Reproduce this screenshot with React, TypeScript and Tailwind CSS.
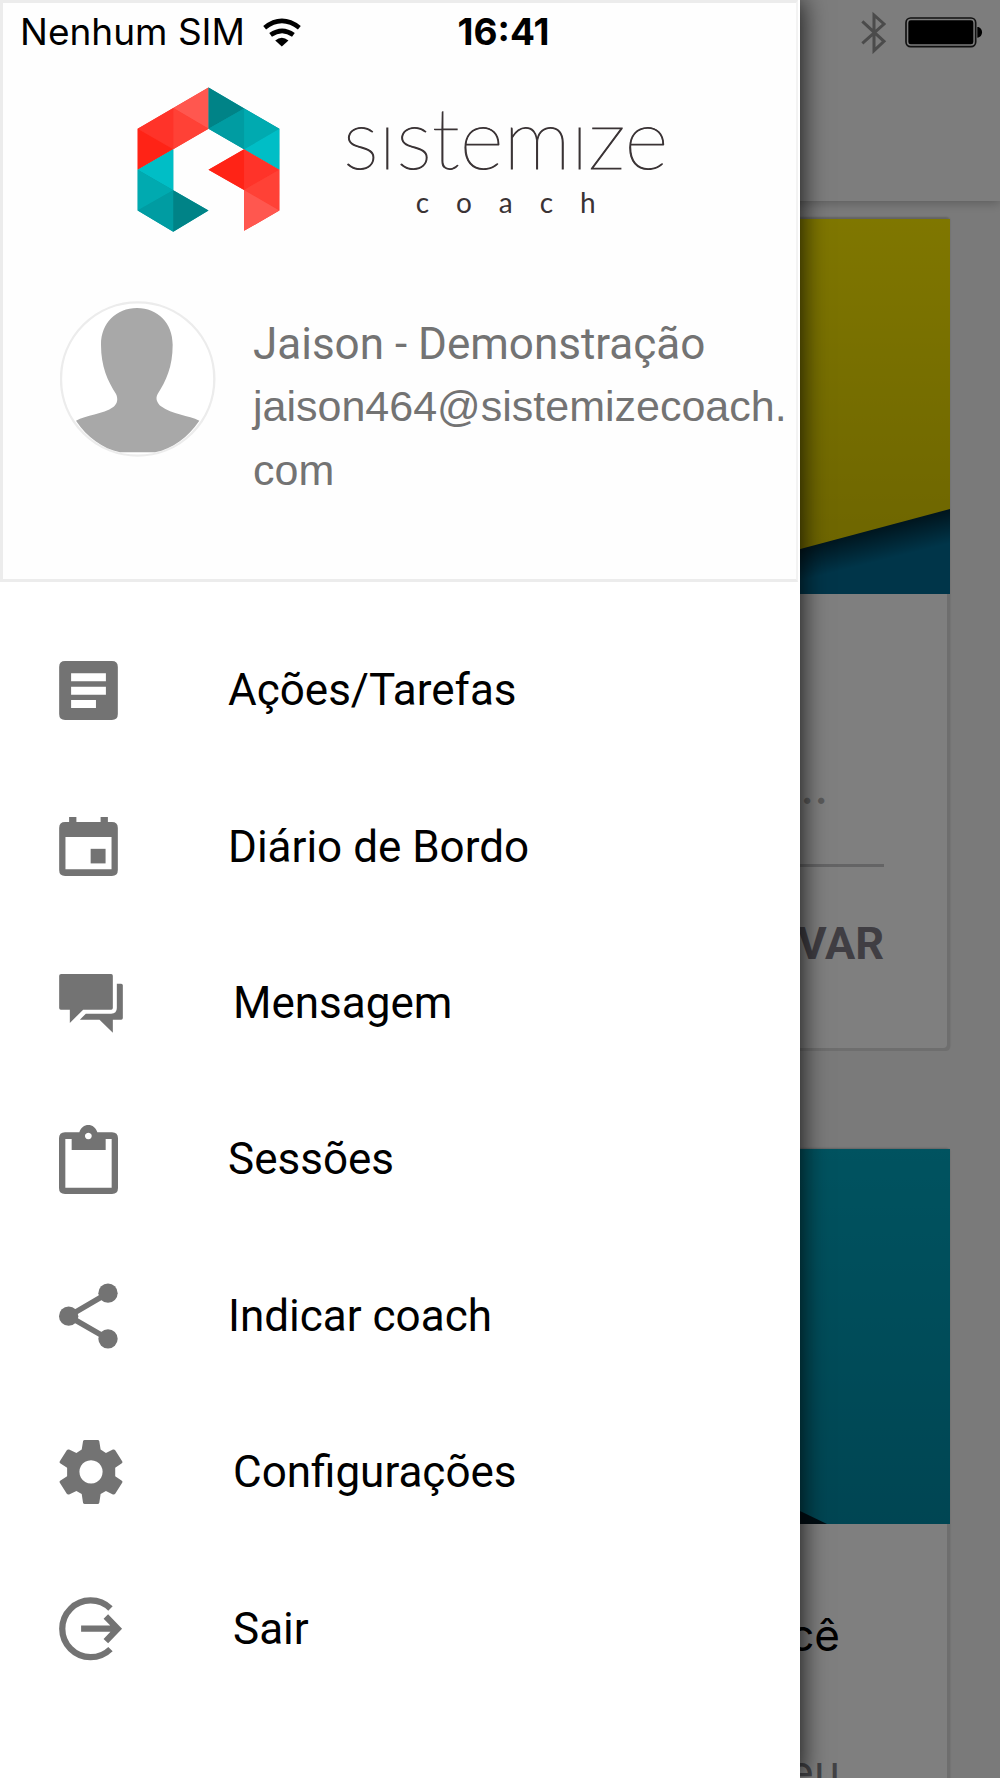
import type { ReactNode } from "react";

interface MenuItem {
  label: string;
  icon: ReactNode;
}

const LogoMark = () => (
  <svg width="143" height="146" viewBox="51 52 430 438" aria-hidden="true">
    {/* Base sólida para não aparecerem emendas entre os triângulos */}
    <path fill="#ff3b31" d="M266 53v124L53 300V177zM373 239l106 61v123l-106 61V361l-107-61z" />
    <path fill="#009ca2" d="M266 53l213 124v123L266 177zM160 239v123l106 61-106 64-107-64V300z" />
    <path fill="#ff574f" d="M266 53v124l-106-62z" />
    <path fill="#ff4136" d="M160 115l106 62-106 62z" />
    <path fill="#ff3329" d="M160 115v124L53 177z" />
    <path fill="#ff2316" d="M53 177l107 62-107 61z" />
    <path fill="#008387" d="M266 53l107 63-107 61z" />
    <path fill="#009ca2" d="M373 116v123l-107-62z" />
    <path fill="#00aab0" d="M373 116l106 61-106 62z" />
    <path fill="#00bec6" d="M479 177v123l-106-61z" />
    <path fill="#00bec6" d="M160 239v123L53 300z" />
    <path fill="#00aab0" d="M53 300l107 62-107 61z" />
    <path fill="#009ca2" d="M160 362v125L53 423z" />
    <path fill="#008387" d="M160 362l106 61-106 64z" />
    <path fill="#ff2316" d="M373 239v122l-107-61z" />
    <path fill="#ff3329" d="M373 239l106 61-106 61z" />
    <path fill="#ff4136" d="M479 300v123l-106-62z" />
    <path fill="#ff574f" d="M373 361l106 62-106 61z" />
  </svg>
);

const Avatar = () => (
  <svg width="156" height="156" viewBox="180 92 468 468" className="shrink-0" role="img" aria-label="Foto do perfil">
    <circle cx="413" cy="326" r="230" fill="#fff" stroke="#ececec" strokeWidth="7" />
    <path
      fill="#a8a8a8"
      d="M411 113c62 0 107 45 107 110 0 67-20 108-45 148-8 14-1 28 10 37 33 25 83 27 115 43-34 50-81 84-133 95H360c-52-12-99-45-132-95 30-18 80-18 113-42 11-9 14-23 7-38-25-40-45-82-45-148 0-65 46-110 108-110z"
    />
  </svg>
);

const Wifi = () => (
  <svg width="38" height="29" viewBox="789 50 115 87" aria-label="Wi-Fi" role="img">
    <path fill="none" stroke="#000" strokeWidth="14" d="M794 79q52-41 105 0M812 101q35-25 69 0" />
    <path d="M826 118q20-17 40 0l-20 18z" />
  </svg>
);

const Bluetooth = () => (
  <svg width="26" height="43" viewBox="486 31 78 129" aria-label="Bluetooth" role="img">
    <path fill="none" stroke="#4b4b4b" strokeWidth="9" d="M490 62l65 60-30 28V43l30 27-65 58" />
  </svg>
);

const Battery = () => (
  <svg width="78" height="31" viewBox="617 50 234 93" aria-label="Bateria" role="img">
    <rect x="620" y="53" width="209" height="86" rx="14" fill="none" stroke="#111" strokeWidth="5" />
    <rect x="627" y="60" width="195" height="72" rx="7" />
    <path d="M834 80c9 0 14 8 14 16s-5 16-14 16z" />
  </svg>
);

const menuItems: MenuItem[] = [
  {
    label: "Ações/Tarefas",
    icon: (
      <svg width="59" height="59" viewBox="58 62 177 178" fill="#737373">
        <path
          fillRule="evenodd"
          d="M76 62h141q18 0 18 18v142q0 18-18 18H76q-18 0-18-18V80q0-18 18-18zM94 99v24h105V99zM94 140v24h105v-24zM94 180v24h75v-24z"
        />
      </svg>
    ),
  },
  {
    label: "Diário de Bordo",
    icon: (
      <svg width="59" height="59" viewBox="58 532 177 178" fill="#737373">
        <path
          fillRule="evenodd"
          d="M88 532h22v15h73v-15h22v15h12q18 0 18 18v127q0 18-18 18H76q-18 0-18-18V565q0-18 18-18h12zM77 592v98h139v-98z"
        />
        <path d="M153 628h45v44h-45z" />
      </svg>
    ),
  },
  {
    label: "Mensagem",
    icon: (
      <svg width="64" height="59" viewBox="58 71 191 177" fill="#737373">
        <path d="M64 71h150q5 0 5 5v97q0 5-5 5h-84l-40 40v-40H63q-5 0-5-5V76q0-5 6-5z" />
        <path d="M231 100h13q5 0 5 5v98q0 5-5 5h-25v39l-40-39h-59l18-18h76q17 0 17-17z" />
      </svg>
    ),
  },
  {
    label: "Sessões",
    icon: (
      <svg width="59" height="69" viewBox="58 526 177 207" fill="#737373">
        <path
          fillRule="evenodd"
          d="M76 548h43c4-14 15-22 27-22s23 8 27 22h44q18 0 18 18v149q0 18-18 18H76q-18 0-18-18V566q0-18 18-18zM77 568v146h139V568h-18v33H96v-33zM146 549a10 10 0 1 0 .1 0z"
        />
      </svg>
    ),
  },
  {
    label: "Indicar coach",
    icon: (
      <svg width="59" height="66" viewBox="58 71 177 197" fill="#737373">
        <path fill="none" stroke="#737373" strokeWidth="17" d="M205 101L87 170l118 68" />
        <circle cx="205" cy="101" r="29" />
        <circle cx="87" cy="170" r="29" />
        <circle cx="205" cy="238" r="29" />
      </svg>
    ),
  },
  {
    label: "Configurações",
    icon: (
      <svg width="64" height="64" viewBox="57 543 192 193" fill="#737373">
        <path
          fillRule="evenodd"
          d="M134 543h39q4 0 5 4l4 25 16 10 21-10q5-1 7 2l21 33q2 4-1 6l-20 14v25l20 14q3 2 1 6l-21 33q-2 3-7 2l-21-10-16 9-4 26q-1 4-5 4h-39q-4 0-5-4l-4-26-16-9-22 10q-5 1-7-2l-21-33q-2-4 1-6l21-14v-25l-21-14q-3-2-1-6l21-33q2-3 7-2l22 10 16-10 4-25q1-4 5-4zM153 604a35 35 0 1 0 .1 0z"
        />
      </svg>
    ),
  },
  {
    label: "Sair",
    icon: (
      <svg width="64" height="64" viewBox="57 1012 192 194" fill="none" stroke="#737373" strokeWidth="19">
        <path d="M212 1047a86 86 0 1 0 0 123" />
        <path d="M123 1108h110M198 1071l36 37-36 38" />
      </svg>
    ),
  },
];

const StatusBar = () => (
  <div className="absolute inset-x-0 top-0 z-20 grid h-16 grid-cols-3 items-center pl-5 pr-[17px] font-['Inter',sans-serif] text-[37px] leading-[44px]">
    <div className="flex items-center gap-[18px]">
      <span className="whitespace-nowrap">Nenhum SIM</span>
      <Wifi />
    </div>
    <span className="pl-1 text-center font-bold">16:41</span>
    <div className="flex items-center justify-end gap-[18px]">
      <Bluetooth />
      <Battery />
    </div>
  </div>
);

const Drawer = () => (
  <aside className="absolute inset-y-0 left-0 z-10 flex w-4/5 flex-col bg-white shadow-[2px_0_24px_rgba(0,0,0,0.8)]">
    <header className="mr-[2px] h-[582px] border-[3px] border-r-2 border-[#ececec] border-r-[#f3f3f3] bg-[#fefefe] pt-[84px]">
      <div className="flex items-start gap-[63px] pl-[134px]">
        <LogoMark />
        <div className="flex flex-col items-center text-[#3a3335]">
          <span className="font-['Lato',sans-serif] text-[85px] font-thin leading-[98px] [-webkit-text-stroke:1px_#3a3335]">
            sıstemıze
          </span>
          <div className="flex w-[180px] justify-between font-['Lato',sans-serif] text-[28px] leading-[34px]">
            {"coach".split("").map((letter, i) => (
              <span key={i}>{letter}</span>
            ))}
          </div>
        </div>
      </div>

      <div className="mt-[68px] flex pl-[57px] text-[#737373]">
        <Avatar />
        <div className="min-w-0 flex-1 pl-[37px] pt-[13px]">
          <p className="font-['Roboto',sans-serif] text-[44px] leading-[60px]">Jaison - Demonstração</p>
          <p className="font-['Liberation_Sans',sans-serif] text-[43px] leading-[64px]">
            jaison464@sistemizecoach.
            <br />
            com
          </p>
        </div>
      </div>
    </header>

    <nav className="grid flex-1 auto-rows-fr pb-[71px] pt-[30px]">
      {menuItems.map(({ label, icon }) => (
        <a
          key={label}
          href="#"
          className="flex items-center gap-[110px] pl-[59px] font-['Roboto',sans-serif] text-[44px] leading-[52px] text-black"
        >
          {icon}
          {label}
        </a>
      ))}
    </nav>
  </aside>
);

const Feed = () => (
  <main className="h-full bg-[#f5f5f5]">
    <div className="h-[201px] bg-[#fbfbfb] shadow-[0_2px_10px_rgba(0,0,0,0.25)]" />

    <div className="flex flex-col gap-[98px] px-[50px] pt-[18px]">
      <article className="rounded bg-white shadow-[inset_-3px_-3px_0_#dcdcdc,0_-2px_2px_rgba(0,0,0,0.2)]">
        <svg className="block h-[375px] w-full" viewBox="0 0 900 375" preserveAspectRatio="xMaxYMin slice">
          <defs>
            <linearGradient id="yellow" x1="0" y1="0" x2="0" y2="1">
              <stop offset="0" stopColor="#ffee00" />
              <stop offset="1" stopColor="#d8c800" />
            </linearGradient>
            <linearGradient id="blue" gradientUnits="userSpaceOnUse" x1="820" y1="310" x2="828" y2="342">
              <stop offset="0" stopColor="#00293a" />
              <stop offset="1" stopColor="#006a92" />
            </linearGradient>
          </defs>
          <rect width="900" height="375" fill="url(#blue)" />
          <path fill="url(#yellow)" d="M0 0h900v290L600 370H0z" />
        </svg>
        <div className="px-[66px]">
          <p className="h-[273px] border-b-[3px] border-[#c8c8ca] pr-[56px] pt-[161px] text-right font-['Inter',sans-serif] text-[48px] leading-[64px] text-[#b5b5b5]">
            ...
          </p>
          <div className="flex h-[184px] justify-end pt-[45px]">
            <button className="h-16 font-['Roboto',sans-serif] text-[45px] font-bold leading-[64px] text-[#807c86]">VAR</button>
          </div>
        </div>
      </article>

      <article className="rounded bg-white shadow-[inset_-3px_-3px_0_#dcdcdc,0_-1px_2px_rgba(0,0,0,0.2)]">
        <svg className="block h-[375px] w-full" viewBox="0 0 900 375" preserveAspectRatio="xMaxYMin slice">
          <defs>
            <linearGradient id="teal" x1="0" y1="0" x2="0" y2="1">
              <stop offset="0" stopColor="#00a6c0" />
              <stop offset="1" stopColor="#008ba6" />
            </linearGradient>
          </defs>
          <rect width="900" height="375" fill="url(#teal)" />
          <path fill="#001a26" d="M0 0l777 375H0z" />
        </svg>
        <div className="px-[110px] pt-[79px] text-right font-['Inter',sans-serif] text-[44px] leading-[64px]">
          <p className="text-black">cê</p>
          <p className="mt-[72px] text-[#84848a]">eu</p>
        </div>
      </article>
    </div>
  </main>
);

const App = () => (
  <div className="relative h-screen overflow-hidden">
    <Feed />
    {/* Fundo escurecido atrás do menu */}
    <div className="absolute inset-0 bg-black/50" />
    <Drawer />
    <StatusBar />
  </div>
);

export default App;
